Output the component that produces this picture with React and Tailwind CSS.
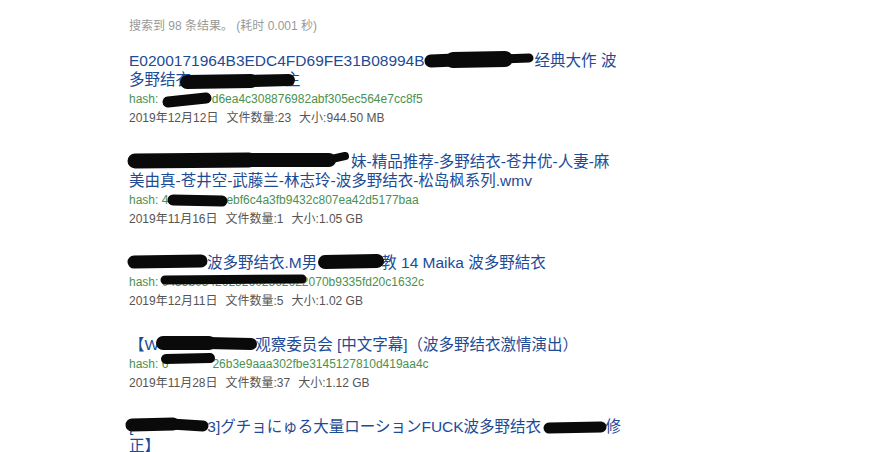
import React from "react";

// 搜索结果页（带涂黑）
const font = { fontFamily: '"Liberation Sans", "Noto Sans CJK SC", Arial, sans-serif' };

// 马克笔涂黑：一个行内占位 + 覆盖在上面的粗线条
function Ink({ className = "", strokes = [], children }) {
  return (
    <span className={"relative inline-block align-top " + className}>
      {children}
      <svg className="pointer-events-none absolute inset-0 h-full w-full overflow-visible">
        {strokes.map(([x1, y1, x2, y2, w], i) => (
          <line
            key={i}
            x1={x1}
            y1={y1}
            x2={x2}
            y2={y2}
            stroke="#0a0a0a"
            strokeWidth={w}
            strokeLinecap="round"
          />
        ))}
      </svg>
    </span>
  );
}

function Result({ title, hash, date, count, size }) {
  return (
    <div className="mb-[25px]">
      <div className="whitespace-nowrap text-[15.5px] leading-[19px] text-[#1d4b96]">{title}</div>
      <div className="whitespace-nowrap text-[12px] leading-[20px] text-[#4a9150]">hash: {hash}</div>
      <div className="whitespace-nowrap text-[12px] leading-[18px] text-[#555]">
        <span className="mr-2">{date}</span>
        <span className="mr-2">文件数量:{count}</span>
        <span>大小:{size}</span>
      </div>
    </div>
  );
}

export default function App() {
  return (
    <div className="min-h-screen bg-white pl-[129px] pt-[17px]" style={font}>
      <p className="mb-[16px] text-[12px] leading-[18px] text-[#999]">
        搜索到 98 条结果。 (耗时 0.001 秒)
      </p>

      <Result
        title={
          <>
            E0200171964B3EDC4FD69FE31B08994B
            <Ink className="h-[19px] w-[110px]" strokes={[[6, 10, 30, 9, 13], [28, 9, 80, 8, 16], [78, 8, 104, 7, 9]]} />
            经典大作 波
            <br />
            多野结衣
            <Ink className="h-[19px] w-[94px]" strokes={[[-4, 12, 60, 11, 14], [58, 11, 98, 10, 12]]} />
            主
          </>
        }
        hash={
          <>
            <Ink className="h-[20px] w-[50px]" strokes={[[6, 13, 44, 9, 11]]} />
            d6ea4c308876982abf305ec564e7cc8f5
          </>
        }
        date="2019年12月12日"
        count="23"
        size="944.50 MB"
      />

      <Result
        title={
          <>
            <Ink className="h-[19px] w-[222px]" strokes={[[6, 9, 120, 8, 15], [118, 8, 200, 8, 14], [198, 8, 216, 4, 8]]} />
            妹-精品推荐-多野结衣-苍井优-人妻-麻
            <br />
            美由真-苍井空-武藤兰-林志玲-波多野结衣-松岛枫系列.wmv
          </>
        }
        hash={
          <>
            4
            <Ink className="h-[20px] w-[58px]" strokes={[[5, 10, 54, 11, 11]]} />
            ebf6c4a3fb9432c807ea42d5177baa
          </>
        }
        date="2019年11月16日"
        count="1"
        size="1.05 GB"
      />

      <Result
        title={
          <>
            <Ink className="h-[19px] w-[78px]" strokes={[[5, 9, 72, 8, 13]]} />
            波多野结衣.M男
            <Ink className="h-[19px] w-[64px]" strokes={[[8, 9, 60, 8, 14]]} />
            教 14 Maika 波多野結衣
          </>
        }
        hash={
          <>
            <Ink strokes={[[3, 8, 140, 7, 9]]}>0455b0542625260256262</Ink>
            2070b9335fd20c1632c
          </>
        }
        date="2019年12月11日"
        count="5"
        size="1.02 GB"
      />

      <Result
        title={
          <>
            【W
            <Ink className="h-[19px] w-[96px]" strokes={[[4, 8, 50, 8, 14], [48, 8, 92, 9, 12]]} />
            观察委员会 [中文字幕]（波多野结衣激情演出）
          </>
        }
        hash={
          <>
            6
            <Ink className="h-[20px] w-[44px]" strokes={[[-2, 5, 42, 4, 10]]} />
            26b3e9aaa302fbe3145127810d419aa4c
          </>
        }
        date="2019年11月28日"
        count="37"
        size="1.12 GB"
      />

      <div className="whitespace-nowrap text-[15.5px] leading-[19px] text-[#1d4b96]">
        [
        <Ink className="h-[19px] w-[74px]" strokes={[[-1, 8, 40, 7, 13], [38, 7, 70, 9, 11]]} />
        3]グチョにゅる大量ローションFUCK波多野结衣{" "}
        <Ink className="h-[19px] w-[60px]" strokes={[[4, 11, 56, 10, 11]]} />
        修
        <br />
        正】
      </div>
    </div>
  );
}
